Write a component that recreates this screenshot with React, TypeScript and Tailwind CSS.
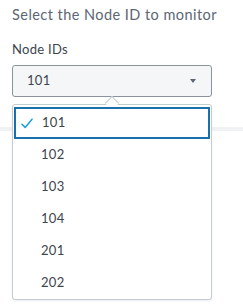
const nodeIds = ["101", "102", "103", "104", "201", "202"];

function CheckIcon() {
  return (
    <svg width="12" height="11" viewBox="0 0 12 11" fill="none" className="shrink-0">
      <path d="M1 6.2 L4.2 9.4 L11 1.2" stroke="#1a9fe2" strokeWidth="1.5" strokeLinecap="round" strokeLinejoin="round" />
    </svg>
  );
}

export default function App() {
  const selected = "101";

  return (
    <div
      className="relative w-[243px] h-[305px] overflow-hidden bg-white"
      style={{ fontFamily: "Lato, 'Open Sans', sans-serif" }}
    >
      <div className="px-[12px] pt-[6px]">
        <p className="text-[14.5px] leading-[18px] tracking-[0.45px] text-[#5c6773]">Select the Node ID to monitor</p>
        <p className="mt-[17px] text-[13px] leading-[16px] tracking-[0.3px] text-[#3c444d]">Node IDs</p>
        <button className="mt-[8px] flex h-[32px] w-[200px] items-center justify-between rounded-[3px] border border-[#8b929b] bg-[#f5f6f8] pl-[14px] pr-[15px] text-[13px] tracking-[0.3px] text-[#3c444d]">
          <span>101</span>
          <span className="h-0 w-0 border-x-[3.5px] border-t-[4.5px] border-x-transparent border-t-[#5c6773]" />
        </button>
      </div>
      <div className="mt-[30px] h-[4px] w-full bg-[#f1f2f4]" />

      {/* dropdown menu */}
      <div className="absolute left-[12px] top-[104px] w-[200px] rounded-[3px] border border-[#c3cbd4] bg-white px-[1px] pt-[2px] shadow-[0_1px_2px_rgba(0,0,0,0.08)]">
        <div className="absolute -top-[7px] left-[94px] h-[10px] w-[10px] rotate-45 border-l border-t border-[#c3cbd4] bg-white" />
        {nodeIds.map((id) =>
          id === selected ? (
            <div
              key={id}
              className="relative flex h-[32px] items-center gap-[9px] border-2 border-[#1a70ac] pl-[5px] text-[13px] tracking-[0.3px] text-[#3c444d]"
            >
              <CheckIcon />
              <span>{id}</span>
            </div>
          ) : (
            <div key={id} className="flex h-[32px] items-center pl-[27px] text-[13px] tracking-[0.3px] text-[#3c444d]">
              {id}
            </div>
          )
        )}
      </div>
    </div>
  );
}
